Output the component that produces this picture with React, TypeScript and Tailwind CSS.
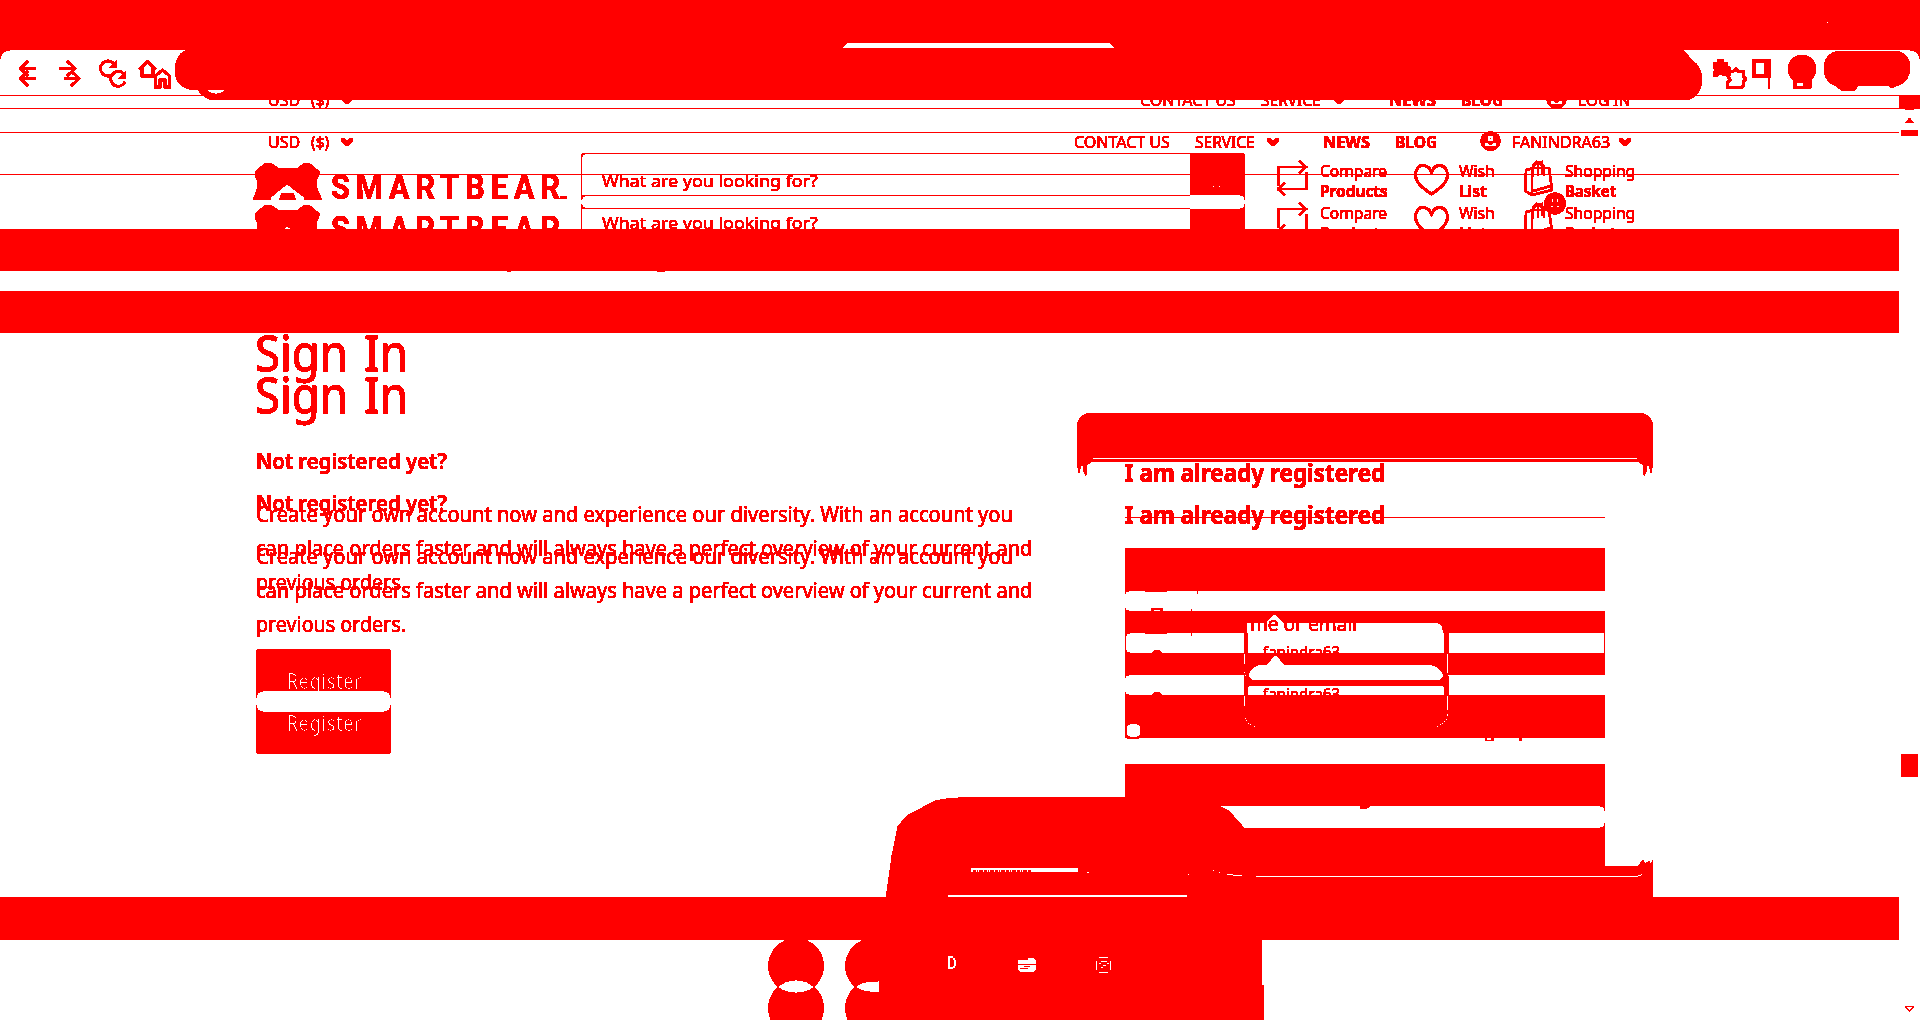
import React, { useLayoutEffect, useRef, useState } from "react";

const ChevronGlyph = () => (
  <svg width="12" height="8" viewBox="0 0 12 8" className="shrink-0">
    <path d="M1 0H3L6 2.6L9 0H11L12 1V3L7 8H5L0 3V1Z" fill="#f00" />
  </svg>
);

type FitProps = { w: number; className?: string; children: React.ReactNode };

/* Text set to an exact measured width. */
function Fit({ w, className = "", children }: FitProps) {
  const ref = useRef<HTMLSpanElement>(null);
  const [scale, setScale] = useState(1);
  useLayoutEffect(() => {
    if (ref.current) setScale(w / ref.current.offsetWidth);
  }, [w]);
  return (
    <span className={"block shrink-0 whitespace-nowrap " + className} style={{ width: w }}>
      <span ref={ref} className="inline-block origin-left" style={{ transform: `scaleX(${scale})` }}>
        {children}
      </span>
    </span>
  );
}

/* Two-tone rendering: every pixel becomes either pure red or white. */
const TwoToneFilter = () => (
  <svg width="0" height="0" className="absolute">
    <filter id="two-tone" x="0" y="0" width="100%" height="100%" colorInterpolationFilters="sRGB">
      <feComponentTransfer>
        <feFuncR type="discrete" tableValues="1 1" />
        <feFuncG type="discrete" tableValues="0 0 0 0 0 0 0 0 0 0 0 0 0 0 0 1" />
        <feFuncB type="discrete" tableValues="0 0 0 0 0 0 0 0 0 0 0 0 0 0 0 1" />
      </feComponentTransfer>
    </filter>
  </svg>
);

const UserGlyph = () => (
  <svg width="21" height="20" viewBox="0 0 21 20" className="mb-0.5 shrink-0">
    <ellipse cx="10.5" cy="10" rx="10" ry="9.5" fill="#f00" />
    <path d="M8 5H13V10H8ZM10 7V8H11V7ZM5 12H8L10 14L13 12H16V15H5Z" fill="#fff" fillRule="evenodd" />
  </svg>
);

const Bear = () => (
  <svg width="69" height="38" viewBox="0 0 69 38" className="mt-[9px] shrink-0">
    <path d="M2 10L12 1H18L25 6H45L51 1H56L67 10L64 17V26L69 38H51V35L34 22L18 35V38H0L4 27V18L2 14Z" fill="#f00" />
    <path d="M26 38L29 31H40L43 38Z" fill="#f00" />
  </svg>
);

const CompareGlyph = () => (
  <svg width="31" height="36" viewBox="0 0 31 36" fill="none" stroke="#f00" strokeWidth="2" className="shrink-0">
    <path d="M1.500 26V7H29M22 1L29 7L22 13M29.500 12V29H1M8 23L1 29L8 35" />
  </svg>
);
const HeartGlyph = () => (
  <svg width="35" height="32" viewBox="0 0 35 32" fill="none" stroke="#f00" strokeWidth="2.300" className="shrink-0">
    <path d="M17.500 8C15 2 11 1.500 8.500 1.500C4 1.500 1.500 6 1.500 11C1.500 19 10 25 17.500 30C25 25 33.500 19 33.500 11C33.500 6 30 1.500 26 1.500C22 1.500 19 4 17.500 8Z" />
  </svg>
);
const BagGlyph = () => (
  <svg width="29" height="36" viewBox="0 0 29 36" fill="none" stroke="#f00" strokeWidth="2" className="shrink-0">
    <path d="M2 10L9 8H25L28 30L8 35L1.500 31Z M8 9V34M9 17V6L13 2L20 6V16M14 16V3L18 2V14M9 31L27 26" />
  </svg>
);

function TopNav({ user }: { user?: boolean }) {
  return (
    <div className="flex h-[26px] items-center pl-[268px] text-[15.5px] leading-[26px]">
      <Fit w={32}>USD</Fit>
      <Fit w={18} className="ml-[11px]">($)</Fit>
      <div className="ml-3"><ChevronGlyph /></div>
      <Fit w={96} className={user ? "ml-[721px]" : "ml-[787px]"}>CONTACT US</Fit>
      <Fit w={60} className="ml-[25px]">SERVICE</Fit>
      <div className="ml-3"><ChevronGlyph /></div>
      <Fit w={47} className="ml-[44px] font-bold">NEWS</Fit>
      <Fit w={42} className="ml-[25px] font-bold">BLOG</Fit>
      <div className="ml-[43px]"><UserGlyph /></div>
      <Fit w={user ? 98 : 52} className="ml-[11px]">{user ? "FANINDRA63" : "LOG IN"}</Fit>
      {user && <div className="ml-[9px]"><ChevronGlyph /></div>}
    </div>
  );
}

function Header() {
  return (
    <div className="flex h-14 pl-[253px]">
      <Bear />
      <Fit w={235} className="ml-[9px] mt-[12px] font-[Roboto] text-[35px] leading-[45px] font-bold tracking-[0.2em]">SMARTBEAR</Fit>
      <div className="-ml-[6px] mt-[43px] h-[3px] w-[7px] bg-[#f00]" />
      <div className="ml-[14px] flex w-[664px] rounded-[4px] border border-[#f00] pl-5">
        <Fit w={216} className="mt-[14px] text-[17px] leading-[26px]">What are you looking for?</Fit>
        <div className="ml-auto w-[54px] bg-[#f00]" />
      </div>
      <div className="ml-8 mt-[7px]"><CompareGlyph /></div>
      <div className="ml-[12px] mt-[8px] text-[16.5px] leading-5">
        <Fit w={67}>Compare</Fit>
        <Fit w={68} className="font-bold">Products</Fit>
      </div>
      <div className="ml-[26px] mt-[11px]"><HeartGlyph /></div>
      <div className="ml-[10px] mt-[8px] text-[16.5px] leading-5">
        <Fit w={36}>Wish</Fit>
        <Fit w={28} className="font-bold">List</Fit>
      </div>
      <div className="ml-[29px] mt-[7px]"><BagGlyph /></div>
      <div className="ml-[12px] mt-[8px] text-[16.5px] leading-5">
        <Fit w={70}>Shopping</Fit>
        <Fit w={51} className="font-bold">Basket</Fit>
      </div>
    </div>
  );
}

function ShopPage({ user }: { user?: boolean }) {
  return (
    <div className="w-[1899px] pt-[87px]">
      <TopNav user={user} />
      <div className="mt-[19px] h-px bg-[#f00]" />
      <div className="mt-5"><Header /></div>
      <div className="mt-[113px] pl-[256px]">
        <Fit w={153} className="-ml-px h-[60px] text-[50px] leading-[60px] [-webkit-text-stroke:0.4px_#f00] [word-spacing:0.1em]">Sign In</Fit>
        <Fit w={191} className="mt-[63px] text-[22px] leading-[30px] font-semibold">Not registered yet?</Fit>
        <div className="mt-[22px] text-[21px] leading-[34px]">
          <Fit w={757}>Create your own account now and experience our diversity. With an account you</Fit>
          <Fit w={776}>can place orders faster and will always have a perfect overview of your current and</Fit>
          <Fit w={150}>previous orders.</Fit>
        </div>
        <div className="mt-[50px] flex h-[63px] w-[135px] rounded-[4px] bg-[#f00] pl-[31px]">
          <Fit w={75} className="text-[21px] leading-[64px] tracking-[0.04em] text-white">Register</Fit>
        </div>
      </div>
    </div>
  );
}

const Toolbar = () => (
  <svg width="1920" height="50" viewBox="0 50 1920 50" className="block" fill="none">
    <path d="M0 50H1920V60Q1918 50 1908 50H12Q2 50 0 60Z" fill="#f00" />
    <path d="M0 60Q1 50 12 50H1908Q1919 50 1920 60V100H0Z" fill="#fff" />
    <path d="M0 95.500H1920" stroke="#f00" />
    <path d="M186 50H1683L1692 60Q1702 67 1702 80Q1701 96 1688 100H213Q203 98 198 90H193Q175 87 175 70Q175 56 186 50Z" fill="#f00" />
    <path d="M207 90H225Q222 94 216 94Q210 94 207 90Z" fill="#fff" />
    <g stroke="#f00" strokeWidth="2.300">
      <path d="M28 61L20.500 68.500L28 76M20 68.500H36M28 71L20.500 78.500L28 86M20 78.500H36" />
      <path d="M67 61L75 68.500L67 76M59 68.500H76M71 71L79 78.500L71 86M64 78.500H80" />
      <path d="M114 64A7.500 7.500 0 1 0 114 73M124 74A7.500 7.500 0 1 0 125 82" />
      <path d="M142 76V67L147.500 62L153 67V76ZM139.500 69L147.500 61.500L155.500 69M155.500 87V76L162.500 70L169.500 76V87H165V80H160V87Z" />
    </g>
    <path d="M117 60V68H109ZM126 71V79H118Z" fill="#f00" />
    <path d="M1713 63L1717 62L1718 59H1723L1724 62H1728V66L1731 68L1730 76H1724L1720 74L1717 77H1713V72L1716 70L1713 68Z" fill="#f00" />
    <path d="M1727.500 87.500V83L1730 80L1728 76V71.500H1733L1736 69L1738 71.500H1743.500V77L1745.500 79L1743.500 82V85L1742 87.500Z" stroke="#f00" strokeWidth="2.600" />
    <path d="M1752 59H1771V78H1770V89H1768V78H1752ZM1756 63V74H1764V63Z" fill="#f00" fillRule="evenodd" />
    <ellipse cx="1802" cy="69" rx="14" ry="14" fill="#f00" />
    <path d="M1793 77H1812V87L1810 89H1793ZM1797 83V86H1803V83Z" fill="#f00" fillRule="evenodd" />
    <path d="M1837 51H1897Q1910 54 1910 68Q1909 83 1896 86L1892 88L1889 86H1858L1854 91H1842L1836 86Q1824 82 1824 68Q1824 55 1837 51Z" fill="#f00" />
  </svg>
);

const Tooltip = () => (
  <svg width="206" height="115" viewBox="1244 613 206 115" className="absolute left-[119px] top-[65px]" fill="none">
    <path d="M1247 623H1265L1273 615H1276L1284 623H1438Q1443 624 1443 631V653H1248V634H1247Z" fill="#fff" />
    <path d="M1244 633H1248V653H1244ZM1444 633H1449V653H1444ZM1244 675H1248V695H1244ZM1444 675H1449V695H1444Z" fill="#f00" />
    <path d="M1258 665H1266L1274 656H1277L1285 665H1432Q1440 667 1443 674V677L1440 680H1252L1249 677V673Q1252 667 1258 665Z" fill="#fff" />
    <path d="M1247 680H1445V687H1443V686H1249V687H1247ZM1247 675H1249V677L1252 680H1247ZM1440 680L1443 677V675H1445V680Z" fill="#f00" />
    <path d="M1244 654h1v10h-1zM1447 654h1v19h-1zM1244 696h1v10h-1zM1447 696h1v14h-1zM1447 714h1v2h-1zM1244 672h1v1h-1zM1245 675h1v1h-1zM1448 675h1v1h-1zM1245 718h1v1h-1zM1246 720h1v1h-1zM1248 723h1v1h-1zM1250 724h1v1h-1zM1254 726h1v1h-1zM1446 719h1v1h-1zM1444 721h1v1h-1zM1442 723h1v1h-1zM1440 724h1v1h-1zM1437 726h1v1h-1z" fill="#fff" />
  </svg>
);

function SignInCard() {
  return (
    <div className="absolute left-[1077px] top-[413px] w-[576px]">
      <div className="h-[45px] rounded-t-[14px] bg-[#f00]" />
      <div className="flex h-[4px] justify-between bg-[#f00] px-[16px]">
        <div className="h-px w-full bg-white" />
      </div>
      <svg width="576" height="28" viewBox="0 0 576 28" className="absolute top-[49px]">
        <path d="M0 0H14L10 3L9 14L6 8V3L4 4L2 11L1 6H0ZM576 0H562L566 3L567 14L570 8V3L572 4L574 11L575 6H576Z" fill="#f00" />
      </svg>
      <div className="relative h-[86px] px-12">
        <Fit w={260} className="relative -top-[7px] text-[25px] leading-[34px] font-bold">I am already registered</Fit>
        <Fit w={260} className="relative -top-[7px] mt-2 text-[25px] leading-[34px] font-bold">I am already registered</Fit>
        <div className="absolute top-[55px] left-12 h-px w-[480px] bg-[#f00]" />
      </div>
      <div className="relative mx-12">
        <div className="h-[43px] rounded-t-[3px] bg-[#f00]" />
        <div className="h-5 bg-[#f00]"><div className="h-full rounded-l-[4px] bg-white" /></div>
        <div className="h-[22px] bg-[#f00]" />
        <div className="h-5 bg-[#f00] px-px"><div className="h-full rounded-l-[4px] bg-white" /></div>
        <div className="h-[22px] bg-[#f00]" />
        <div className="h-5 bg-[#f00]"><div className="h-full rounded-l-[4px] bg-white" /></div>
        <div className="h-[43px] bg-[#f00] pl-0.5 pt-[29px]">
          <div className="h-[13px] w-[13px] rounded-[3px] bg-white" />
        </div>
        <svg width="480" height="200" viewBox="1125 548 480 200" className="absolute top-0 left-0" fill="#f00">
          <path d="M1145 591H1167V592H1145ZM1197 591H1198V594H1197ZM1191 609H1192V611H1191ZM1191 633H1192V636H1191ZM1145 633H1167V634H1145ZM1151 611V609L1154 608H1160L1163 609V611H1160V610H1154V611ZM1152 653L1155 650H1159L1162 653ZM1152 695L1155 692H1159L1162 695ZM1127 738H1139V739H1127ZM1485 738H1487V740H1491V738H1494V740L1491 741H1486ZM1519 738H1522V741H1519Z" />
        </svg>
        <Tooltip />
        <div className="absolute top-[67px] left-[125px] h-[20px] overflow-hidden">
          <Fit w={107} className="text-[20px] leading-[18px]">me or email</Fit>
        </div>
        <div className="absolute top-[93px] left-[138px] h-3 overflow-hidden text-[17px] leading-[22px]"><Fit w={77}>fanindra63</Fit></div>
        <div className="absolute top-[135px] left-[138px] h-3 overflow-hidden text-[17px] leading-[22px]"><Fit w={77}>fanindra63</Fit></div>
      </div>
      <div className="mx-12 mt-[26px] h-[42px] rounded-t-[3px] bg-[#f00]" />
      <div className="mx-12 h-[22px] bg-[#f00]"><div className="h-full rounded-r-[5px] bg-white" /></div>
      <div className="mx-12 h-[38px] bg-[#f00]" />
      <div className="h-[31px] bg-[#f00]" />
    </div>
  );
}

const BottomBlob = () => (
  <svg width="920" height="224" viewBox="740 796 920 224" className="absolute left-[740px] top-[796px]" fill="none">
    <path d="M886 897L892 855L898 826L908 815L935 801L945 799L969 797H1126V806H1219L1229 811L1244 828V940H1262V985L1264 986V1020H878V940H886Z" fill="#f00" />
    <g fill="#f00">
      <circle cx="796" cy="966" r="27.600" /><circle cx="796" cy="1008" r="27.600" />
      <circle cx="873" cy="966" r="27.600" /><circle cx="873" cy="1008" r="27.600" />
      <path d="M1360 806H1370L1366 809H1360ZM1653 860V866H1638L1643 860L1645 864L1649 861L1650 865Z" />
    </g>
    <path d="M778 987Q785 980 796 980Q807 980 814 987Q807 993 796 993Q785 993 778 987ZM856 987Q861 981 879 981V992Q861 993 856 987ZM971 868H1078V872H971ZM948 895H1187V897H948ZM1018 960H1028V958H1034L1036 960V970L1034 972H1020L1018 970Z" fill="#fff" />
    <path d="M973 871H1032" stroke="#f00" strokeWidth="2" strokeDasharray="3 1 1 1 4 1" />
    <path d="M1018 964.500H1036M1020 968.500H1028M1024 966.500H1030" stroke="#f00" />
    <path d="M948 956h5v2h-5zM953 958h2v2h-2zM954 960h2v6h-2zM953 966h2v2h-2zM948 967h5v2h-5zM948 956h2v13h-2z" fill="#fff" />
    <path d="M1099 957.500H1108M1099 972.500H1108M1096.500 961V970M1110.500 961V970M1099 963.500H1101M1101 961.500H1107M1107 963.500H1109M1101 967.500H1103M1103 965.500H1106" stroke="#fff" />
    <path d="M1188 874h1v1h-1zM1213 870h1v1h-1zM1219 872h1v1h-1zM1227 874h6v1h-6zM1233 875h9v1h-9zM1256 876h382v1h-382zM1638 875h3v1h-3zM1641 874h1v1h-1zM1087 872h2v1h-2z" fill="#fff" />
  </svg>
);

export default function App() {
  return (
    <div className="relative h-[1020px] w-[1920px] overflow-hidden bg-white font-['Noto_Sans',sans-serif] text-[#f00] [filter:url(#two-tone)]">
      <TwoToneFilter />
      <ShopPage />
      <div className="absolute top-[42px] left-0"><ShopPage user /></div>

      <div className="absolute top-0 left-0 h-[1020px] w-[1920px]">
        <div className="h-[50px] bg-[#f00]">
          <svg width="1920" height="50" className="block">
            <path d="M843 48V47L847 43H1110L1114 47V48Z" fill="#fff" />
            <path d="M1827 22h1v1h-1z" fill="#fff" />
          </svg>
        </div>
        <Toolbar />
        <div className="mt-[8px] h-px bg-[#f00]" />
        <div className="mt-[120px] h-[42px] w-[1899px] bg-[#f00]" />
        <div className="flex h-5 pl-[507px]">
          <div className="h-px w-1 bg-[#f00]" />
          <div className="ml-[146px] h-px w-2 bg-[#f00]" />
        </div>
        <div className="h-[42px] w-[1899px] bg-[#f00]" />
        <div className="mt-[564px] h-[43px] w-[1899px] bg-[#f00]" />
      </div>

      <div className="absolute top-[195px] left-[581px] flex h-[14px] w-[664px] items-stretch">
        <div className="w-[609px] rounded-l-[3px] border-y border-[#f00]" />
        <div className="w-[55px] rounded-r-[5px] bg-white" />
      </div>
      <div className="absolute top-[200px] left-[581px] h-1 w-px bg-white" />
      <div className="absolute top-[186px] left-[1213px] flex gap-[5px]"><div className="h-px w-px bg-white" /><div className="h-px w-px bg-white" /></div>
      <div className="absolute top-[691px] left-[256px] h-[21px] w-[135px] rounded-[7px] bg-white" />

      <svg width="22" height="23" viewBox="0 0 22 23" className="absolute top-[192px] left-[1544px]">
        <circle cx="11" cy="11.500" r="10.700" fill="#f00" />
        <path d="M8 7h1v3H8zM13 7h1v3h-1zM7 14h2v1H7zM13 14h2v1h-2z" fill="#fff" />
      </svg>

      <SignInCard />
      <BottomBlob />

      <div className="absolute top-[96px] left-[1899px] flex w-[21px] flex-col items-center">
        <div className="h-[12px] w-full bg-[#f00]" />
        <div className="mt-px h-px w-[9px] bg-[#f00]" />
        <svg width="9" height="5" className="mt-2"><path d="M0 5L4.500 0L9 5Z" fill="#f00" /></svg>
        <div className="mt-[7px] h-[6px] w-[17px] bg-[#f00]" />
        <div className="mt-[618px] h-[23px] w-[17px] bg-[#f00]" />
        <svg width="9" height="6" className="mt-[229px]"><path d="M0 .5H9L4.500 5.500Z" fill="none" stroke="#f00" /></svg>
      </div>
    </div>
  );
}
